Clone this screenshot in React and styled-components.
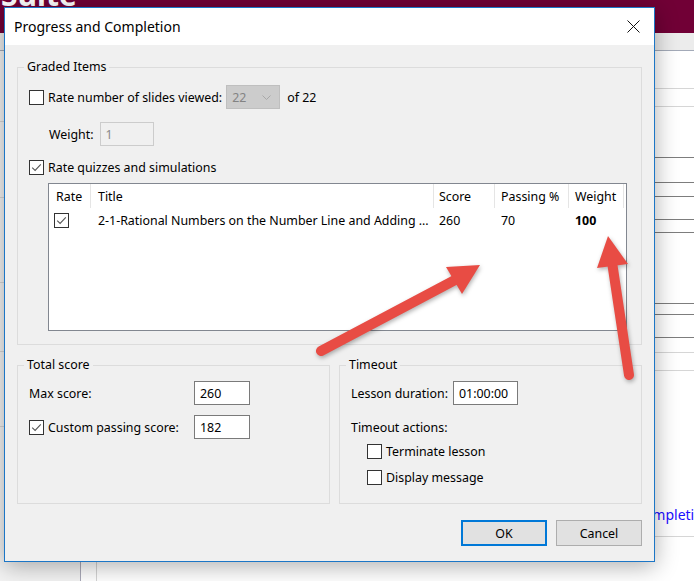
import React from 'react'
import styled, { createGlobalStyle } from 'styled-components'

const GlobalStyle = createGlobalStyle`
  html, body { margin: 0; padding: 0; }
  body {
    font-family: "Noto Sans", sans-serif;
    font-size: 12.4px;
    color: #000;
    overflow: hidden;
    background: #fff;
  }
  * { box-sizing: border-box; }
`

/* ---------- page behind the dialog ---------- */

const Screen = styled.div`
  position: relative;
  width: 694px;
  height: 581px;
  overflow: hidden;
  display: flex;
  flex-direction: column;
  background: #fff;
`

const TopBar = styled.header`
  height: 33px;
  flex-shrink: 0;
  background: #710036;
  overflow: hidden;
  padding-left: 1px;
`

const Brand = styled.span`
  display: block;
  margin-top: -20px;
  color: #fff;
  font: bold 30px/1 "Noto Sans", sans-serif;
`

const ToolStrip = styled.div`
  height: 18px;
  flex-shrink: 0;
  background: #ececec;
  border-bottom: 1px solid #a3aab8;
`

const Content = styled.div`
  flex: 1;
  display: flex;
  min-width: 0;
`

const Sidebar = styled.aside`
  width: 81px;
  flex-shrink: 0;
  background: #f3f3f3;
  border-right: 1px solid #a9a9b8;
  display: flex;
  flex-direction: column;
`

const Gutter = styled.div`
  width: 16px;
  flex-shrink: 0;
  border-right: 1px solid #d4d4d4;
`

const Main = styled.main`
  flex: 1;
  min-width: 0;
  overflow: hidden;
  display: flex;
  flex-direction: column;
`

const Rule = styled.div`
  height: ${p => p.$h}px;
  flex-shrink: 0;
  border-bottom: 1px solid ${p => (p.$dark ? '#7d7d7d' : '#d6d6d6')};
`

const LinkRow = styled(Rule)`
  display: flex;
  align-items: flex-end;
  padding: 0 0 12px 538px;
  white-space: nowrap;
`

const PageLink = styled.span`
  color: #1a0dff;
  font-size: 14px;
  line-height: 18px;
`

const mainRules = [
  [38, false], [18, false], [51, true], [25, true], [14, true], [23, true],
  [13, true], [71, true], [11, true], [23, true], [15, false], [18, false],
]

const sideRules = [71, 76, 85, 69, 75]

/* ---------- dialog ---------- */

const Dialog = styled.section`
  position: absolute;
  left: 4px;
  top: 7px;
  width: 651px;
  height: 555px;
  border: 1px solid #1c76c6;
  background: #f0f0f0;
  display: flex;
  flex-direction: column;
  box-shadow: 0 4px 22px rgba(0, 0, 0, 0.32);
`

const TitleBar = styled.div`
  height: 37px;
  flex-shrink: 0;
  background: #fff;
  display: flex;
  align-items: center;
  justify-content: space-between;
  padding: 0 14px 0 9px;
`

const Title = styled.h1`
  margin: 0;
  font-size: 14px;
  font-weight: normal;
`

const Body = styled.div`
  flex: 1;
  display: flex;
  flex-direction: column;
  padding: 22px 12px 15px 12px;
`

const Group = styled.div`
  position: relative;
  border: 1px solid #dcdcdc;
  padding: ${p => p.$pad};
  width: ${p => p.$w || 'auto'};
  height: ${p => p.$h || 'auto'};
  display: flex;
  flex-direction: column;
`

const Caption = styled.span`
  position: absolute;
  top: -9px;
  left: 6px;
  padding: 0 3px;
  line-height: 16px;
  background: #f0f0f0;
`

const Row = styled.div`
  display: flex;
  align-items: center;
  height: ${p => p.$h || 24}px;
  margin-top: ${p => p.$mt || 0}px;
  padding-left: ${p => p.$indent || 0}px;
  gap: ${p => p.$gap || 0}px;
  white-space: nowrap;
`

const LabelCell = styled.div`
  width: ${p => p.$w}px;
  display: flex;
  align-items: center;
  gap: 4px;
`

const BoxLabel = styled.label`
  display: flex;
  align-items: center;
  gap: 4px;
`

const Box = styled.span`
  width: 15px;
  height: 15px;
  flex-shrink: 0;
  border: 1px solid #333;
  background: #fff;
  display: inline-flex;
  align-items: center;
  justify-content: center;
`

const Field = styled.div`
  width: ${p => p.$w}px;
  height: 24px;
  border: 1px solid ${p => (p.$disabled ? '#cccccc' : '#7a7a7a')};
  background: ${p => (p.$disabled ? '#f0f0f0' : '#fff')};
  color: ${p => (p.$disabled ? '#8a8a8a' : '#000')};
  display: flex;
  align-items: center;
  padding-left: 5px;
`

const Combo = styled.div`
  width: 54px;
  height: 24px;
  margin-left: 4px;
  border: 1px solid #bfbfbf;
  background: #cccccc;
  color: #838383;
  display: flex;
  align-items: center;
  justify-content: space-between;
  padding: 0 8px 0 5px;
`

const Suffix = styled.span`
  margin-left: 7px;
`

const Table = styled.div`
  width: 579px;
  height: 148px;
  margin: 7px 0 0 19px;
  border: 1px solid #828790;
  background: #fff;
  flex-shrink: 0;
`

const Grid = styled.div`
  display: grid;
  grid-template-columns: 42px 343px 61px 74px 55px;
  height: ${p => p.$h}px;
  align-items: center;
  white-space: nowrap;
`

const HeadCell = styled.div`
  height: 100%;
  display: flex;
  align-items: center;
  padding-left: ${p => p.$pad ?? 7}px;
  border-right: 1px solid #e5e5e5;
`

const Cell = styled.div`
  padding-left: ${p => p.$pad ?? 7}px;
  font-weight: ${p => (p.$bold ? 'bold' : 'normal')};
  overflow: hidden;
  display: flex;
  align-items: center;
`

const Split = styled.div`
  display: flex;
  gap: 9px;
  margin-top: 20px;
`

const Buttons = styled.div`
  display: flex;
  justify-content: flex-end;
  gap: 9px;
  margin-top: 16px;
`

const Button = styled.button`
  width: 86px;
  height: 26px;
  font: inherit;
  color: #000;
  background: #e1e1e1;
  border: ${p => (p.$primary ? '2px solid #0078d7' : '1px solid #adadad')};
  padding: 0;
`

const Overlay = styled.svg`
  position: absolute;
  left: 0;
  top: 0;
  pointer-events: none;
  filter: drop-shadow(1px 2px 2px rgba(0, 0, 0, 0.3));
`

function CheckBox({ checked }) {
  return (
    <Box>
      {checked && (
        <svg width="11" height="11" viewBox="0 0 11 11">
          <path d="M1.2 5.6 L4.1 8.4 L9.8 2.4" fill="none" stroke="#555" strokeWidth="1.1" />
        </svg>
      )}
    </Box>
  )
}

function CloseIcon() {
  return (
    <svg width="13" height="13" viewBox="0 0 13 13">
      <path d="M0.5 0.5 L12.5 12.5 M12.5 0.5 L0.5 12.5" stroke="#111" strokeWidth="1" />
    </svg>
  )
}

function Chevron() {
  return (
    <svg width="9" height="5" viewBox="0 0 9 5">
      <path d="M0.5 0.5 L4.5 4.5 L8.5 0.5" fill="none" stroke="#a8a8a8" strokeWidth="1" />
    </svg>
  )
}

function Arrows() {
  return (
    <Overlay width="694" height="581">
      <g stroke="#e84c44" strokeWidth="10" strokeLinecap="round">
        <line x1="321" y1="351" x2="455" y2="280" />
        <line x1="629" y1="375" x2="612" y2="262" />
      </g>
      <g fill="#e84c44">
        <polygon points="480,265 446,267 462,294" />
        <polygon points="608,236 597,268 628,264" />
      </g>
    </Overlay>
  )
}

export default function App() {
  return (
    <Screen>
      <GlobalStyle />
      <TopBar><Brand>Suite</Brand></TopBar>
      <ToolStrip />
      <Content>
        <Sidebar>
          {sideRules.map((h, i) => <Rule key={i} $h={h} />)}
        </Sidebar>
        <Gutter />
        <Main>
          {mainRules.map(([h, dark], i) => <Rule key={i} $h={h} $dark={dark} />)}
          <LinkRow $h={166}><PageLink>Completion</PageLink></LinkRow>
        </Main>
      </Content>

      <Dialog>
        <TitleBar>
          <Title>Progress and Completion</Title>
          <CloseIcon />
        </TitleBar>
        <Body>
          <Group $pad="17px 0 13px 11px">
            <Caption>Graded Items</Caption>
            <Row>
              <BoxLabel><CheckBox /> Rate number of slides viewed:</BoxLabel>
              <Combo>22<Chevron /></Combo>
              <Suffix>of 22</Suffix>
            </Row>
            <Row $mt={13} $indent={20} $gap={6}>
              Weight:
              <Field $w={54} $disabled>1</Field>
            </Row>
            <Row $mt={12} $h={18}>
              <BoxLabel><CheckBox checked /> Rate quizzes and simulations</BoxLabel>
            </Row>
            <Table>
              <Grid $h={24}>
                <HeadCell>Rate</HeadCell>
                <HeadCell>Title</HeadCell>
                <HeadCell $pad={5}>Score</HeadCell>
                <HeadCell $pad={6}>Passing %</HeadCell>
                <HeadCell $pad={6}>Weight</HeadCell>
              </Grid>
              <Grid $h={24}>
                <Cell $pad={5}><CheckBox checked /></Cell>
                <Cell>2-1-Rational Numbers on the Number Line and Adding ...</Cell>
                <Cell $pad={5}>260</Cell>
                <Cell $pad={6}>70</Cell>
                <Cell $pad={6} $bold>100</Cell>
              </Grid>
            </Table>
          </Group>

          <Split>
            <Group $pad="15px 0 0 11px" $w="313px" $h="139px">
              <Caption>Total score</Caption>
              <Row>
                <LabelCell $w={165}>Max score:</LabelCell>
                <Field $w={56}>260</Field>
              </Row>
              <Row $mt={10}>
                <LabelCell $w={165}><CheckBox checked /> Custom passing score:</LabelCell>
                <Field $w={56}>182</Field>
              </Row>
            </Group>
            <Group $pad="15px 0 0 11px" $w="303px" $h="139px">
              <Caption>Timeout</Caption>
              <Row>
                <LabelCell $w={102}>Lesson duration:</LabelCell>
                <Field $w={65}>01:00:00</Field>
              </Row>
              <Row $mt={13} $h={18}>Timeout actions:</Row>
              <Row $mt={6} $h={18} $indent={16}>
                <BoxLabel><CheckBox /> Terminate lesson</BoxLabel>
              </Row>
              <Row $mt={8} $h={18} $indent={16}>
                <BoxLabel><CheckBox /> Display message</BoxLabel>
              </Row>
            </Group>
          </Split>

          <Buttons>
            <Button $primary>OK</Button>
            <Button>Cancel</Button>
          </Buttons>
        </Body>
      </Dialog>

      <Arrows />
    </Screen>
  )
}
